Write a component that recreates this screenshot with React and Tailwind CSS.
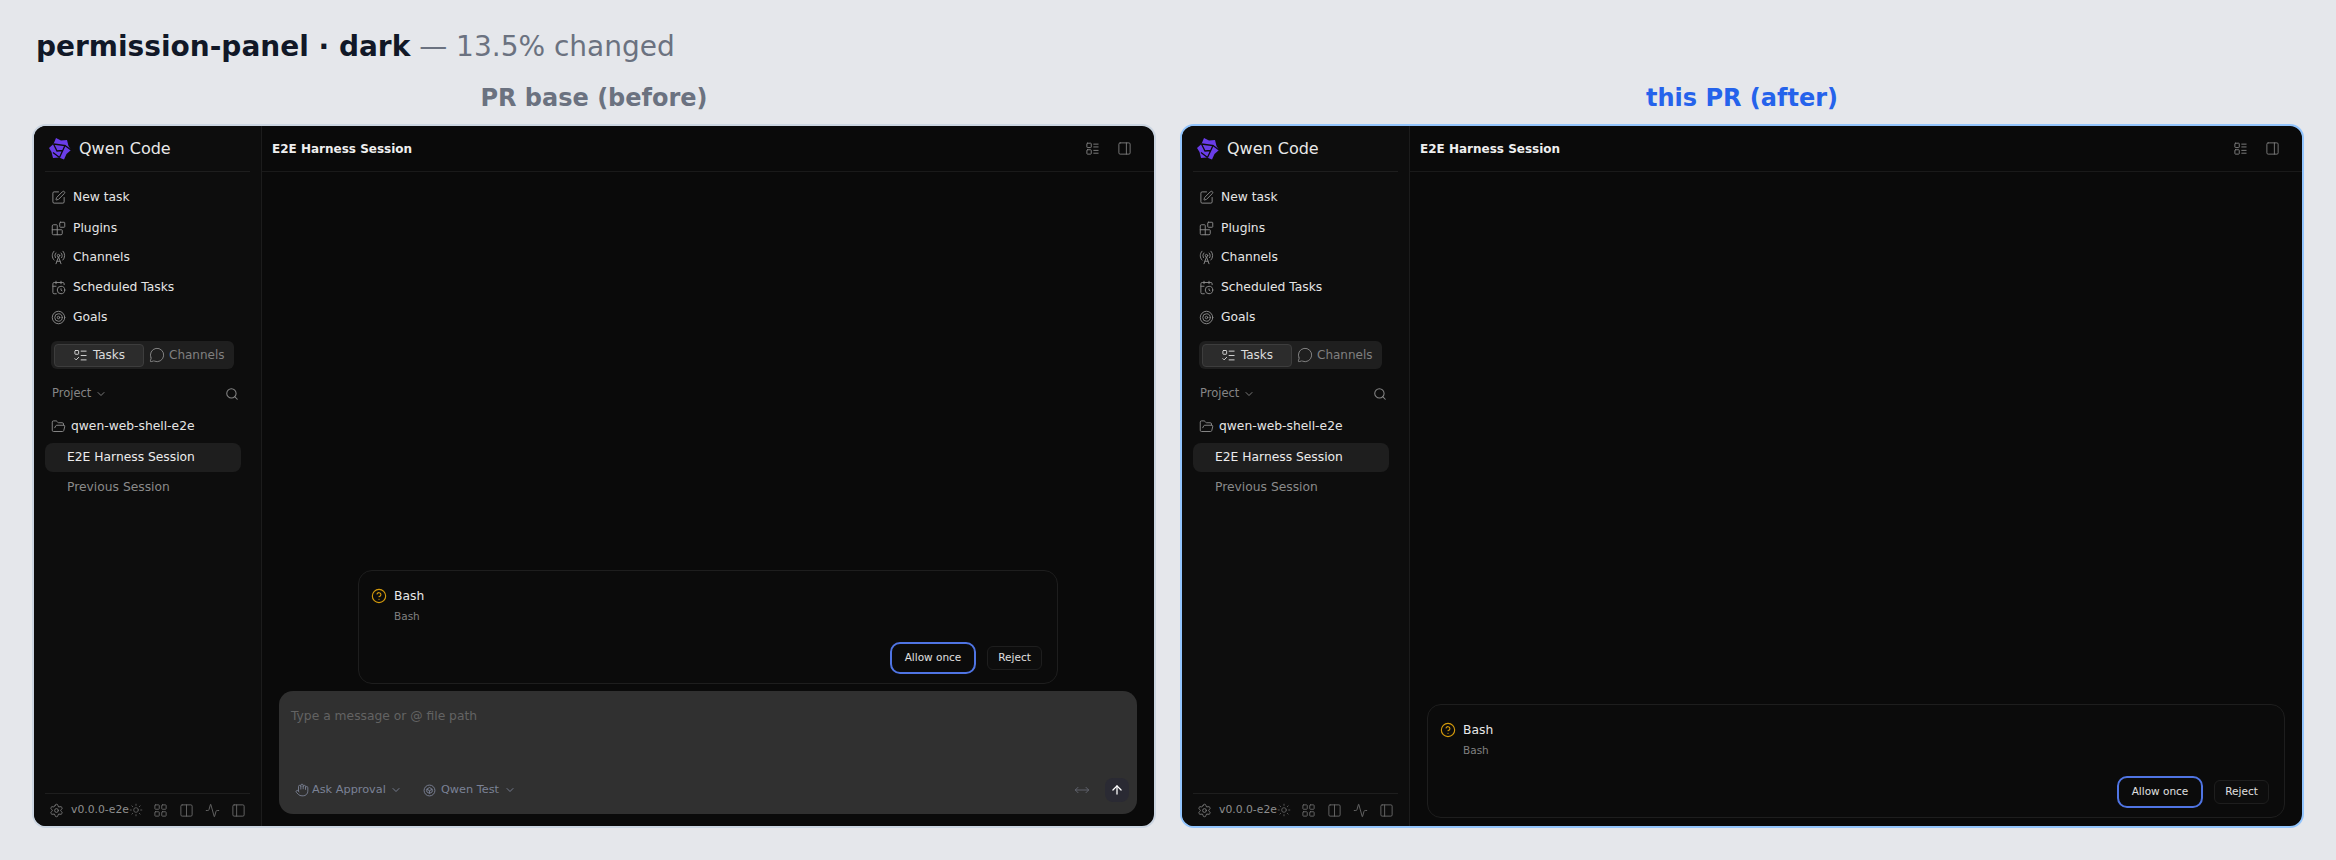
import {
  SquarePen, Blocks, RadioTower, CalendarClock, Target, ListTodo, MessageCircle, ChevronDown, Search,
  FolderOpen, Settings, Sun, LayoutGrid, Columns2, Activity, PanelLeft, PanelRight, Hand, ArrowUp,
  MoveHorizontal, CircleHelp,
} from 'lucide-react'

const navItems = [
  { icon: SquarePen, label: 'New task', cls: 'h-[31px]' },
  { icon: Blocks, label: 'Plugins', cls: 'h-[30px]' },
  { icon: RadioTower, label: 'Channels', cls: 'h-[29px]' },
  { icon: CalendarClock, label: 'Scheduled Tasks', cls: 'h-[30px]' },
  { icon: Target, label: 'Goals', cls: 'h-[30px]' },
]

const Logo = () => (
  <svg className="w-[24px] h-[24px] shrink-0" viewBox="0 0 24 24">
    <path d="M8 1 L13 3.5 L19 3 L20.5 9 L23 13 L18.5 17 L16 22.5 L11 20.5 L5 21 L3.5 15 L1 11 L5.5 7 Z" fill="#6a3de8" />
    <path d="M5.5 7 L17 8.5 L11.5 20.5 M17 8.5 L23 13 M11.5 20.5 L5 15.5 M5.5 7 L9 14 L14.5 13.5" fill="none" stroke="#0d0d0d" strokeWidth="1.3" />
  </svg>
)

const QwenModelIcon = () => (
  <svg className="w-[13px] h-[13px]" viewBox="0 0 24 24" fill="none" stroke="currentColor" strokeWidth="1.7" strokeLinejoin="round">
    <circle cx="12" cy="12" r="10" />
    <path d="M12 6.5 L17 9.5 V14.5 L12 17.5 L7 14.5 V9.5 Z M7 9.5 L12 12.5 L17 9.5 M12 12.5 V17.5" />
  </svg>
)

const ListBoxes = () => (
  <svg className="w-[15px] h-[15px] ml-auto text-[#7a7a7a]" viewBox="0 0 24 24" fill="none" stroke="currentColor" strokeWidth="1.6" strokeLinecap="round">
    <rect x="3" y="3.5" width="7" height="7" rx="1" />
    <rect x="3" y="14" width="7" height="7" rx="1" />
    <path d="M14 5h7M14 9.5h7M14 15h7M14 19.5h7" />
  </svg>
)

function Sidebar() {
  return (
    <aside className="w-[228px] shrink-0 bg-[#0d0d0d] border-r border-[#1c1c1c] flex flex-col px-[11px]">
      <div className="h-[46px] shrink-0 border-b border-[#1e1e1e] flex items-center gap-[7px] pl-[3px] text-[16px] text-[#e8e8e8]">
        <Logo />
        Qwen Code
      </div>
      <nav className="pt-[10px] pl-[6px]">
        {navItems.map((n) => (
          <div key={n.label} className={`flex items-center gap-[7px] text-[12.3px] text-[#e5e5e5] ${n.cls}`}>
            <n.icon className="w-[15px] h-[15px] text-[#8c8c8c]" strokeWidth={1.5} />
            {n.label}
          </div>
        ))}
      </nav>
      <div className="mt-[9px] ml-[6px] w-[183px] h-[28px] rounded-[6px] bg-[#1f1f1f] flex items-center px-[3px] text-[12px]">
        <div className="w-[90px] h-[23px] rounded-[4px] bg-[#2c2c2c] border border-[#3d3d3d] flex items-center justify-center gap-[5px] text-[#dcdcdc]">
          <ListTodo className="w-[15px] h-[15px]" strokeWidth={1.5} />
          Tasks
        </div>
        <div className="flex items-center gap-[4px] pl-[5px] text-[#808080]">
          <MessageCircle className="w-[16px] h-[16px]" strokeWidth={1.5} />
          Channels
        </div>
      </div>
      <div className="mt-[16px] ml-[7px] mr-[11px] h-[18px] flex items-center text-[11.5px] text-[#858585]">
        Project
        <ChevronDown className="w-[12px] h-[12px] ml-[4px]" strokeWidth={1.8} />
        <Search className="w-[14px] h-[14px] ml-auto" strokeWidth={1.8} />
      </div>
      <div className="mt-[14px] ml-[6px] h-[18px] flex items-center gap-[5px] text-[12.3px] text-[#e5e5e5]">
        <FolderOpen className="w-[15px] h-[15px] text-[#8c8c8c]" strokeWidth={1.5} />
        qwen-web-shell-e2e
      </div>
      <div className="mt-[8px] h-[29px] w-[196px] rounded-[8px] bg-[#1e1e1e] flex items-center pl-[22px] text-[12.3px] text-[#ececec]">
        E2E Harness Session
      </div>
      <div className="h-[30px] flex items-center pl-[22px] text-[12.3px] text-[#8a8a8a]">Previous Session</div>
      <div className="mt-auto h-[33px] border-t border-[#1e1e1e] flex items-center pl-[4px] text-[#7a7a7a]">
        <Settings className="w-[15px] h-[15px]" strokeWidth={1.5} />
        <span className="ml-[7px] text-[10.8px] text-[#8f8f8f] w-[58px] whitespace-nowrap">v0.0.0-e2e</span>
        <Sun className="w-[14px] h-[14px] text-[#666666]" strokeWidth={1.4} />
        <LayoutGrid className="w-[15px] h-[15px] ml-[10px] text-[#666666]" strokeWidth={1.5} />
        <Columns2 className="w-[15px] h-[15px] ml-[11px] text-[#666666]" strokeWidth={1.5} />
        <Activity className="w-[15px] h-[15px] ml-[11px] text-[#666666]" strokeWidth={1.5} />
        <PanelLeft className="w-[15px] h-[15px] ml-[11px] text-[#666666]" strokeWidth={1.5} />
      </div>
    </aside>
  )
}

function PermissionCard({ wide }) {
  return (
    <div className={`h-[114px] rounded-[14px] border border-[#1e1e1e] bg-[#0b0b0b] flex flex-col pt-[16px] pl-[12px] pr-[15px] ${wide ? 'w-full' : 'w-[700px] mx-auto'}`}>
      <div className="flex items-center gap-[7px] h-[18px] text-[12.3px] text-[#e8e8e8]">
        <CircleHelp className="w-[16px] h-[16px] text-[#d49a0c]" strokeWidth={1.7} />
        Bash
      </div>
      <div className="mt-[4px] ml-[23px] h-[14px] leading-[14px] text-[10.5px] text-[#808080]">Bash</div>
      <div className="mt-auto mb-[9px] flex items-center justify-end gap-[11px] text-[10.5px] text-[#e0e0e0]">
        <div className="h-[32px] w-[86px] rounded-[10px] border-2 border-[#4f74e3] bg-[#0b0b0b] flex items-center justify-center">Allow once</div>
        <div className="h-[24px] w-[55px] rounded-[6px] border border-[#1e1e1e] bg-[#0d0d0d] flex items-center justify-center">Reject</div>
      </div>
    </div>
  )
}

function Composer() {
  return (
    <div className="mt-[7px] h-[123px] rounded-[14px] bg-[#303030] flex flex-col pr-[8px] pb-[12px] pl-[11px]">
      <div className="mt-[17px] pl-[1px] h-[16px] leading-[16px] text-[12.3px] text-[#636363]">Type a message or @ file path</div>
      <div className="mt-auto h-[24px] flex items-center text-[11.3px] text-[#7b8296]">
        <Hand className="w-[14px] h-[14px] ml-[5px]" strokeWidth={1.5} />
        <span className="ml-[3px]">Ask Approval</span>
        <ChevronDown className="w-[12px] h-[12px] ml-[4px]" strokeWidth={1.8} />
        <span className="ml-[21px]"><QwenModelIcon /></span>
        <span className="ml-[5px]">Qwen Test</span>
        <ChevronDown className="w-[12px] h-[12px] ml-[5px]" strokeWidth={1.8} />
        <MoveHorizontal className="w-[16px] h-[16px] ml-auto text-[#666a75]" strokeWidth={1.3} />
        <div className="w-[24px] h-[24px] ml-[15px] rounded-[8px] bg-[#2a2a33] flex items-center justify-center">
          <ArrowUp className="w-[14px] h-[14px] text-white" strokeWidth={2.2} />
        </div>
      </div>
    </div>
  )
}

function Frame({ title, titleCls, borderCls, after }) {
  return (
    <section>
      <h2 className={`h-[30px] leading-[30px] text-center text-[24px] font-bold ${titleCls}`}>{title}</h2>
      <div className={`mt-[11px] h-[704px] rounded-[14px] border-2 overflow-hidden flex bg-[#0a0a0a] ${borderCls}`}>
        <Sidebar />
        <main className="flex-1 min-w-0 flex flex-col">
          <header className="h-[46px] shrink-0 border-b border-[#1a1a1a] flex items-center pl-[10px] pr-[22px] text-[12px] font-bold text-[#efefef]">
            E2E Harness Session
            <ListBoxes />
            <PanelRight className="w-[15px] h-[15px] ml-[17px] text-[#7a7a7a]" strokeWidth={1.5} />
          </header>
          <div className="flex-1" />
          <div className={`px-[17px] ${after ? 'pb-[8px]' : 'pb-[12px]'}`}>
            <PermissionCard wide={after} />
            {!after && <Composer />}
          </div>
        </main>
      </div>
    </section>
  )
}

export default function App() {
  return (
    <div className="h-[860px] bg-[#e5e7eb] overflow-hidden px-[32px] pt-[27px] font-['DejaVu_Sans',sans-serif]">
      <h1 className="pl-[4px] h-[40px] leading-[40px] text-[28px] text-[#6b7280]">
        <span className="font-bold text-[#111827]">permission-panel · dark</span> — 13.5% changed
      </h1>
      <div className="mt-[16px] grid grid-cols-2 gap-[24px]">
        <Frame title="PR base (before)" titleCls="text-[#6b7280]" borderCls="border-[#cbd5e1]" />
        <Frame title="this PR (after)" titleCls="text-[#2563eb]" borderCls="border-[#93c5fd]" after />
      </div>
    </div>
  )
}
